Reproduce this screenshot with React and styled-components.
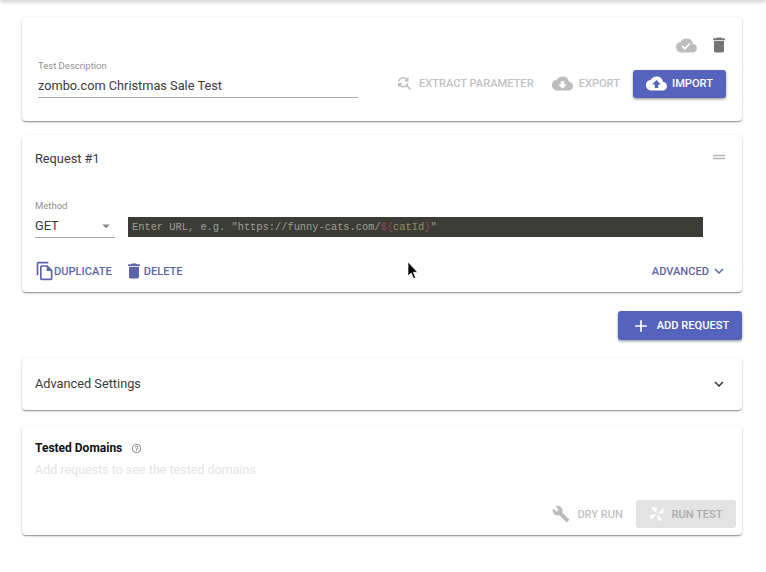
import styled, { createGlobalStyle } from 'styled-components';
import {
  MdAdd,
  MdArrowDropDown,
  MdBuild,
  MdCloudDone,
  MdCloudDownload,
  MdCloudUpload,
  MdDelete,
  MdDragHandle,
  MdExpandMore,
  MdFindReplace,
  MdHelpOutline,
  MdOutlineFileCopy,
} from 'react-icons/md';

const GlobalStyle = createGlobalStyle`
  html, body {
    margin: 0;
    padding: 0;
    background: #fff;
    overflow: hidden;
  }
  * {
    box-sizing: border-box;
  }
`;

const Page = styled.div`
  position: relative;
  width: 766px;
  height: 572px;
  padding: 17px 24px 0 22px;
  display: flex;
  flex-direction: column;
  font-family: Roboto, sans-serif;
  color: #333;
  overflow: hidden;
`;

const TopShadow = styled.div`
  position: absolute;
  top: -4px;
  left: 0;
  right: 0;
  height: 4px;
  box-shadow: 0 1px 5px rgba(0, 0, 0, 0.3);
`;

const Card = styled.section`
  background: #fff;
  border-radius: 4px;
  height: ${(props) => props.$height}px;
  margin-bottom: ${(props) => props.$gap ?? 14}px;
  padding: ${(props) => props.$padding};
  display: flex;
  flex-direction: column;
  box-shadow: 0 1px 3px rgba(0, 0, 0, 0.2), 0 1px 1px rgba(0, 0, 0, 0.2),
    0 2px 1px -1px rgba(0, 0, 0, 0.14);
`;

const IconRow = styled.div`
  display: flex;
  justify-content: flex-end;
  align-items: center;
  gap: 12px;
  height: 20px;
  margin-right: -3px;
  color: #757575;
`;

const HeaderRow = styled.div`
  display: flex;
  align-items: center;
  justify-content: space-between;
  height: ${(props) => (props.$tall ? '52px' : 'auto')};
`;

const DescriptionRow = styled.div`
  display: flex;
  justify-content: space-between;
  align-items: flex-end;
  margin-top: 4px;
`;

const Field = styled.div`
  width: ${(props) => props.$width}px;
  border-bottom: 1px solid #a9a9a9;
  display: flex;
  flex-direction: column;
`;

const FieldLabel = styled.label`
  font-size: 9.5px;
  line-height: 11px;
  padding-top: 1px;
  color: #8f8f8f;
`;

const FieldValue = styled.div`
  display: flex;
  align-items: center;
  justify-content: space-between;
  font-size: 12.75px;
  line-height: 18px;
  margin-top: 6px;
  padding-bottom: 2px;
  color: #3a3a3a;
`;

const Actions = styled.div`
  display: flex;
  align-items: center;
  gap: ${(props) => props.$gap || 0}px;
`;

const TopActions = styled(Actions)`
  button {
    padding-bottom: 2px;
  }
`;

const TextButton = styled.button`
  border: 0;
  background: none;
  padding: 0;
  height: 28px;
  margin-left: ${(props) => props.$offset || 0}px;
  display: flex;
  align-items: center;
  gap: ${(props) => props.$gap ?? 6}px;
  font: 500 11.1px Roboto, sans-serif;
  color: ${(props) => props.$color || '#c2c2c2'};
  svg {
    color: ${(props) => props.$color || '#bdbdbd'};
    flex: none;
  }
`;

const CopyIcon = styled(MdOutlineFileCopy)`
  margin-right: -1px;
`;

const PrimaryButton = styled.button`
  border: 0;
  border-radius: 3px;
  width: ${(props) => props.$width}px;
  height: ${(props) => props.$height || 28}px;
  margin-left: ${(props) => props.$offset || 0}px;
  display: flex;
  align-items: center;
  justify-content: center;
  gap: ${(props) => props.$gap || 6}px;
  background: #5563bd;
  color: #fff;
  font: 500 11.1px Roboto, sans-serif;
  box-shadow: 0 1px 3px rgba(0, 0, 0, 0.3), 0 2px 2px rgba(0, 0, 0, 0.12);
`;

const DisabledButton = styled.button`
  border: 0;
  border-radius: 3px;
  width: 100px;
  height: 28px;
  display: flex;
  align-items: center;
  justify-content: center;
  gap: 6px;
  background: #e3e3e3;
  color: #adadad;
  font: 500 11.1px Roboto, sans-serif;
`;

const CardTitle = styled.h2`
  margin: 0;
  font-size: 12.75px;
  font-weight: 400;
  line-height: 18px;
  color: #3a3a3a;
`;

const HandleIcon = styled(MdDragHandle)`
  margin-top: -5px;
`;

const MethodRow = styled.div`
  display: flex;
  align-items: flex-end;
  gap: 13px;
  margin-top: 31px;
`;

const UrlEditor = styled.div`
  width: 575px;
  height: 20px;
  margin-bottom: 1px;
  padding-left: 4px;
  background: #3c3c37;
  font: 10.37px/20px 'Liberation Mono', monospace;
  color: #9e9e93;
  white-space: pre;
`;

const Token = styled.span`
  color: ${(props) => props.$color};
`;

const RequestActions = styled.div`
  display: flex;
  align-items: center;
  justify-content: space-between;
  margin-top: 19px;
`;

const AddRow = styled.div`
  display: flex;
  justify-content: flex-end;
  margin-bottom: 18px;
`;

const BoldTitle = styled.div`
  display: flex;
  align-items: center;
  gap: 8px;
  font-size: 12px;
  font-weight: 700;
  line-height: 16px;
  color: #111;
  svg {
    margin-left: 1px;
    color: #8a8a8a;
  }
`;

const EmptyHint = styled.p`
  margin: 6px 0 0;
  font-size: 12.5px;
  line-height: 16px;
  color: #e4e4e4;
`;

const RunActions = styled.div`
  display: flex;
  justify-content: flex-end;
  align-items: center;
  gap: 13px;
  margin-top: auto;
  margin-right: -10px;
`;

const Cursor = styled.svg`
  position: absolute;
  left: 407px;
  top: 262px;
`;

const Pinwheel = () => (
  <svg width="16" height="16" viewBox="0 0 16 16" fill="#fff">
    <path d="M7.5 7.5L2 1.5h5.5zM8.5 7.5L14.5 2v5.5zM8.5 8.5L14 14.5H8.5zM7.5 8.5L1.5 14V8.5z" />
  </svg>
);

const App = () => (
  <Page>
    <GlobalStyle />
    <TopShadow />
    <Card $height={104} $padding="18px 16px 0 16px">
      <IconRow>
        <MdCloudDone size={21} color="#bdbdbd" />
        <MdDelete size={20} />
      </IconRow>
      <DescriptionRow>
        <Field $width={320}>
          <FieldLabel>Test Description</FieldLabel>
          <FieldValue>zombo.com Christmas Sale Test</FieldValue>
        </Field>
        <TopActions>
          <TextButton>
            <MdFindReplace size={18} />
            EXTRACT PARAMETER
          </TextButton>
          <TextButton $offset={18}>
            <MdCloudDownload size={21} />
            EXPORT
          </TextButton>
          <PrimaryButton $width={93} $offset={13} $gap={5}>
            <MdCloudUpload size={21} />
            IMPORT
          </PrimaryButton>
        </TopActions>
      </DescriptionRow>
    </Card>

    <Card $height={157} $gap={19} $padding="15px 14px 0 13px">
      <HeaderRow>
        <CardTitle>Request #1</CardTitle>
        <HandleIcon size={18} color="#b5b5b5" />
      </HeaderRow>
      <MethodRow>
        <Field $width={80}>
          <FieldLabel>Method</FieldLabel>
          <FieldValue>
            GET
            <MdArrowDropDown size={18} color="#8a8a8a" />
          </FieldValue>
        </Field>
        <UrlEditor>
          Enter URL, e.g. "https://funny-cats.com/
          <Token $color="#8c4a57">{'${'}</Token>
          <Token $color="#94905f">catId</Token>
          <Token $color="#8c4a57">{'}'}</Token>"
        </UrlEditor>
      </MethodRow>
      <RequestActions>
        <Actions $gap={12}>
          <TextButton $color="#5b65a8" $gap={0}>
            <CopyIcon size={20} />
            DUPLICATE
          </TextButton>
          <TextButton $color="#5b65a8" $gap={0}>
            <MdDelete size={20} />
            DELETE
          </TextButton>
        </Actions>
        <TextButton $color="#5b65a8" $gap={1}>
          ADVANCED
          <MdExpandMore size={18} />
        </TextButton>
      </RequestActions>
    </Card>

    <AddRow>
      <PrimaryButton $width={124} $height={29} $gap={6}>
        <MdAdd size={20} />
        ADD REQUEST
      </PrimaryButton>
    </AddRow>

    <Card $height={52} $gap={16} $padding="0 14px 0 13px">
      <HeaderRow $tall>
        <CardTitle>Advanced Settings</CardTitle>
        <MdExpandMore size={18} color="#333" />
      </HeaderRow>
    </Card>

    <Card $height={109} $gap={0} $padding="14px 16px 7px 13px">
      <BoldTitle>
        Tested Domains
        <MdHelpOutline size={11} />
      </BoldTitle>
      <EmptyHint>Add requests to see the tested domains</EmptyHint>
      <RunActions>
        <TextButton $gap={7}>
          <MdBuild size={18} />
          DRY RUN
        </TextButton>
        <DisabledButton>
          <Pinwheel />
          RUN TEST
        </DisabledButton>
      </RunActions>
    </Card>

    <Cursor width="12" height="18" viewBox="0 0 12 18">
      <path d="M1 0v14l3.2-3 2.4 5.6 2-0.9-2.3-5.4H10.5z" fill="#000" stroke="#fff" strokeWidth="0.7" />
    </Cursor>
  </Page>
);

export default App;
